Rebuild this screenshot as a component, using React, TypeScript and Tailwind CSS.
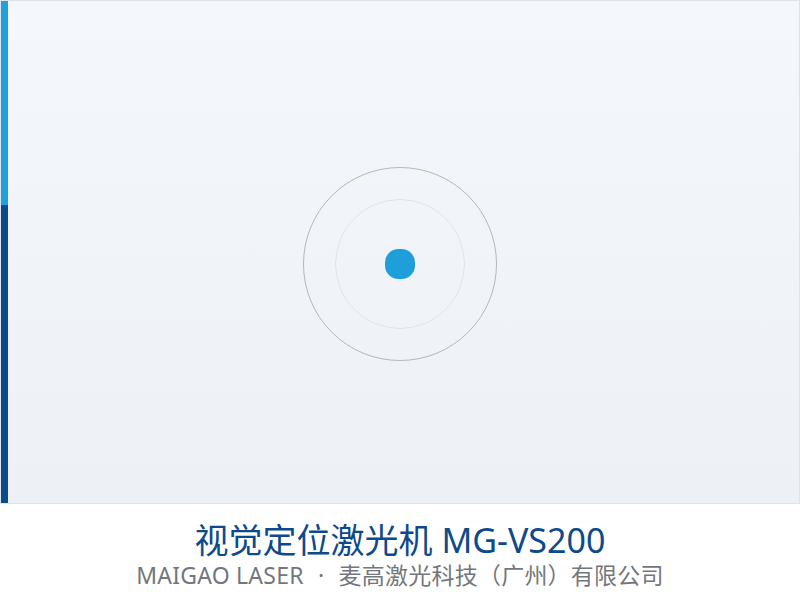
export default function App() {
  return (
    <div
      className="flex h-[600px] w-[800px] flex-col bg-white"
      style={{ fontFamily: '"Noto Sans", "Noto Sans CJK SC", sans-serif' }}
    >
      {/* stage */}
      <div className="flex h-[504px] shrink-0 border border-[#dde3ea] bg-[linear-gradient(180deg,#f4f7fb_0%,#edf0f5_100%)]">
        <div className="flex w-[7px] shrink-0 flex-col">
          <div className="h-[204px] bg-[#21a0db]" />
          <div className="flex-1 bg-[#0b4a8d]" />
        </div>
        <div className="flex flex-1 items-center justify-center pt-[24px] pr-[7px]">
          <div className="flex size-[194px] items-center justify-center rounded-full border border-[#b3b7bf]">
            <div className="flex size-[130px] items-center justify-center rounded-full border border-[#e0e3e9]">
              <div className="size-[30px] rounded-[45%] bg-[#1e9fd9]" />
            </div>
          </div>
        </div>
      </div>

      {/* caption */}
      <div className="flex flex-1 flex-col items-center pt-[16px]">
        <h1 className="text-[34px] leading-[40px] text-[#0d4a8c]">视觉定位激光机 MG-VS200</h1>
        <p className="text-[23px] leading-[30px] tracking-[0.01em] text-[#73777d]">
          MAIGAO LASER <span className="mx-2">·</span> 麦高激光科技（广州）有限公司
        </p>
      </div>
    </div>
  );
}
